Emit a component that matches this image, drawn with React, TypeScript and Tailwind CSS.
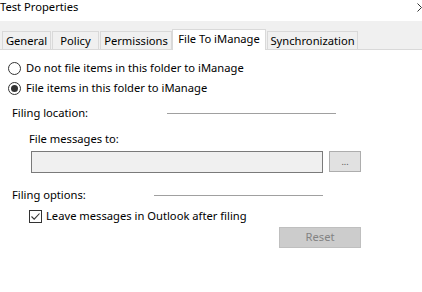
import React from 'react';

const tabs = [
  { label: 'General', w: 'w-[49px]' },
  { label: 'Policy', w: 'w-[47px]' },
  { label: 'Permissions', w: 'w-[72px]' },
  { label: 'File To iManage', w: 'w-[94px]', active: true },
  { label: 'Synchronization', w: 'w-[91px]' },
];

function Radio({ checked, label }: { checked?: boolean; label: string }) {
  return (
    <div className="flex items-center h-[20px]">
      <span className="w-[13px] h-[13px] rounded-full border border-[#333] bg-white flex items-center justify-center">
        {checked && <span className="w-[7px] h-[7px] rounded-full bg-[#333]" />}
      </span>
      <span className="ml-[5px]">{label}</span>
    </div>
  );
}

export default function App() {
  return (
    <div className="w-[422px] h-[292px] bg-white text-[11.2px] text-black overflow-hidden" style={{ fontFamily: '"Noto Sans", "Open Sans", sans-serif' }}>
      <div className="h-[21px] flex items-start justify-between">
        <span className="leading-[14px]">Test Properties</span>
        <svg width="5" height="10" viewBox="0 0 5 10" className="mt-[3px]">
          <path d="M0.5 0.5 L4.5 4.5 M0.5 8.5 L4.5 4.5" stroke="#333" strokeWidth="1" fill="none" />
        </svg>
      </div>
      <div className="h-[29px] bg-[#f0f0f0] flex items-end pl-[2px] border-b border-[#d9d9d9]">
        {tabs.map((t) =>
          t.active ? (
            <div key={t.label} className={`${t.w} h-[21px] mb-[-1px] bg-white border border-b-0 border-[#d9d9d9] flex items-center justify-center`}>
              <span className="-mt-[2px]">{t.label}</span>
            </div>
          ) : (
            <div key={t.label} className={`${t.w} h-[18px] border border-b-0 border-[#d9d9d9] ml-[1px] first:ml-0 flex items-center justify-center`}>
              <span className="mt-[1px]">{t.label}</span>
            </div>
          )
        )}
      </div>
      <div className="pl-[8px] pt-[8px]">
        <Radio label="Do not file items in this folder to iManage" />
        <Radio checked label="File items in this folder to iManage" />
      </div>
      <div className="pl-[12px] mt-[5px] flex items-center h-[20px]">
        <span>Filing location:</span>
        <span className="ml-[79px] w-[169px] h-px bg-[#a0a0a0]" />
      </div>
      <div className="pl-[29px] mt-[6px] h-[20px] flex items-center">File messages to:</div>
      <div className="pl-[31px] mt-[2px] flex items-start">
        <div className="w-[292px] h-[22px] bg-[#f0f0f0] border border-[#7a7a7a]" />
        <div className="ml-[6px] w-[32px] h-[21px] bg-[#e1e1e1] border border-[#adadad] flex items-center justify-center text-[9px] text-[#555]">...</div>
      </div>
      <div className="pl-[12px] mt-[12px] flex items-center h-[20px]">
        <span>Filing options:</span>
        <span className="ml-[68px] w-[169px] h-px bg-[#a0a0a0]" />
      </div>
      <div className="pl-[29px] mt-[1px] flex items-center h-[20px]">
        <span className="w-[13px] h-[13px] border border-[#333] bg-white flex items-center justify-center">
          <svg width="11" height="11" viewBox="0 0 11 11">
            <path d="M1.5 5.5 L4.2 8.2 L9.5 2.5" fill="none" stroke="#333" strokeWidth="1.1" />
          </svg>
        </span>
        <span className="ml-[4px]">Leave messages in Outlook after filing</span>
      </div>
      <div className="pl-[279px] mt-[1px]">
        <div className="w-[82px] h-[21px] bg-[#cccccc] border border-[#bfbfbf] flex items-center justify-center text-[#838383]">Reset</div>
      </div>
    </div>
  );
}
